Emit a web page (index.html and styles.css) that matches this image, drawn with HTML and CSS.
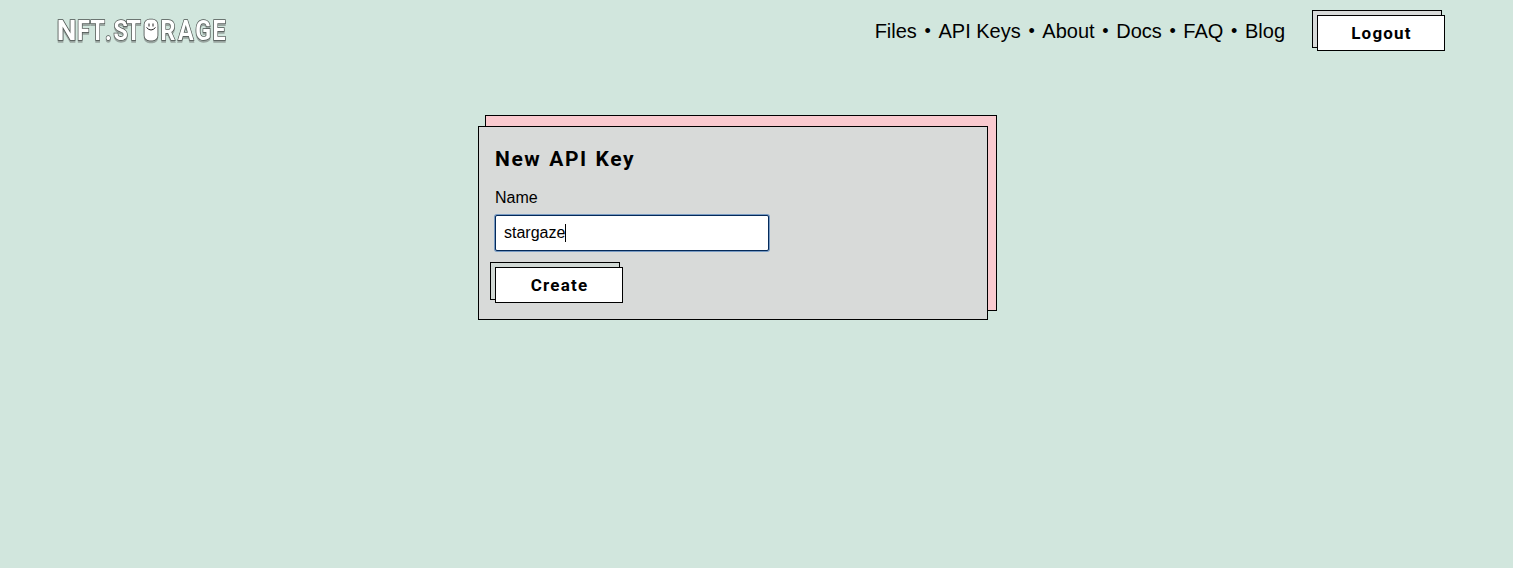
FILE: index.html
```html
<!DOCTYPE html>
<html lang="en">
<head>
<meta charset="utf-8">
<title>New API Key - NFT.Storage</title>
<link rel="stylesheet" href="styles.css">
</head>
<body>
<header class="header">
  <a class="logo" aria-label="NFT.Storage">
    <svg width="180" height="36" viewBox="0 0 180 36">
      <g class="logo-face">
        <text transform="scale(1.03 1)" y="25" x=".8">N</text>
        <text transform="scale(.86 1)" y="25" x="24.500 40 57 67 82">FT.ST</text>
        <text transform="scale(.86 1)" y="25" x="121.500 142 162 182">RAGE</text>
        <rect x="88.500" y="4.500" width="13" height="21" rx="5"/>
      </g>
      <path d="M93 8.500v3M97 8.500v3M90.500 12.500q4.500 5 9 0" fill="none" stroke="#222"/>
    </svg>
  </a>
  <nav class="nav">
    <a>Files</a><span class="dot">•</span><a>API Keys</a><span class="dot">•</span><a>About</a><span class="dot">•</span><a>Docs</a><span class="dot">•</span><a>FAQ</a><span class="dot">•</span><a>Blog</a>
  </nav>
  <div class="btn-wrap"><button class="btn">Logout</button></div>
</header>
<main class="main">
  <div class="card-wrap">
    <form class="card">
      <h2 class="title">New API Key</h2>
      <label class="label" for="name">Name</label>
      <div class="input" id="name">stargaze<span class="caret"></span></div>
      <div class="btn-wrap"><button class="btn" type="button">Create</button></div>
    </form>
  </div>
</main>
</body>
</html>
```
FILE: styles.css
```css
*, *::before { box-sizing: border-box; }
body {
  margin: 0;
  min-height: 568px;
  background: #d1e6dd;
  color: #000;
  font: 16px/24px "Liberation Sans", Arial, sans-serif;
}
.header {
  display: flex;
  align-items: flex-start;
  height: 66px;
  padding: 15px 68px 0 56px;
}
.logo { margin-right: auto; }
.logo svg { display: block; }
.logo text {
  font: 700 27px/36px Roboto, sans-serif;
}
.logo-face {
  fill: #fff;
  stroke: #4b524f;
  stroke-width: 1.5;
  paint-order: stroke;
  filter: drop-shadow(0 2.5px 0 #98a49f);
}
.nav {
  display: flex;
  margin-right: 32px;
  font-size: 20px;
  line-height: 32px;
}
.dot { margin: 0 7.65px; font-size: 18px; }
.btn-wrap {
  position: relative;
  isolation: isolate;
  width: 128px;
  height: 36px;
}
.btn-wrap::before {
  content: "";
  position: absolute;
  z-index: -1;
  top: -5px;
  left: -5px;
  width: 130px;
  height: 38px;
  border: 1px solid #000;
  background: #d8dad9;
}
.btn {
  display: block;
  width: 100%;
  height: 100%;
  padding: 0 0 0 1px;
  border: 1px solid #000;
  background: #fff;
  color: #000;
  font: 700 17px/34px Roboto, sans-serif;
  letter-spacing: 1.2px;
}
.card .btn-wrap::before { background: #d1d9d5; }
.main { padding: 60px 0 0 478px; }
.card-wrap {
  position: relative;
  isolation: isolate;
  width: 510px;
}
.card-wrap::before {
  content: "";
  position: absolute;
  z-index: -1;
  top: -11px;
  left: 7px;
  width: 512px;
  height: 196px;
  border: 1px solid #000;
  background: #facacf;
}
.card {
  height: 194px;
  padding: 16px;
  border: 1px solid #000;
  background: #d8dad9;
}
.title {
  margin: 0;
  font: 700 21px/32px Roboto, sans-serif;
  letter-spacing: 1.6px;
  word-spacing: 1px;
}
.label { display: block; margin: 11px 0 5px; }
.input {
  display: flex;
  align-items: center;
  width: 274px;
  height: 36px;
  margin-bottom: 16px;
  padding: 0 8px;
  border: 1px solid #052a59;
  border-radius: 2px;
  background: #fff;
  box-shadow: 0 0 0 1px #779ac3;
}
.caret { width: 1px; height: 18px; margin-bottom: 1px; background: #000; }
```
